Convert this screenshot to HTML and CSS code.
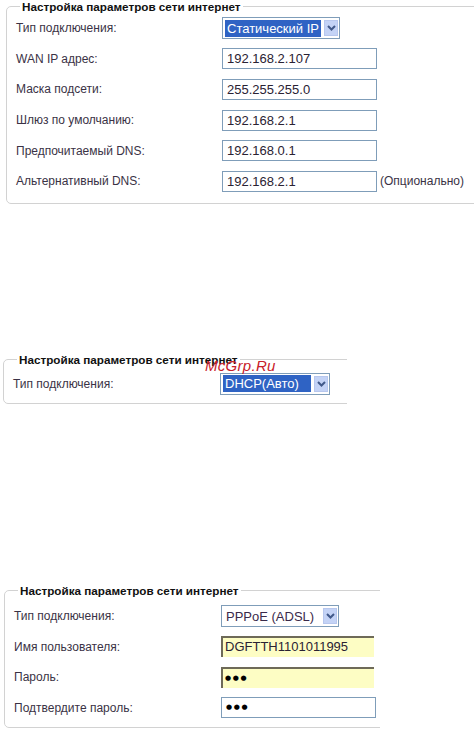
FILE: index.html
```html
<html>

<head>
    <meta http-equiv="Content-Type" content="text/html" charset="utf-8">
    <title>Настройка параметров сети интернет</title>
    <link rel="stylesheet" href="styles.css">
</head>

<body>
    <!-- static IP -->
    <div class="frame frame-static">
        <fieldset class="box">
            <legend>Настройка параметров сети интернет</legend>
            <div class="row">
                <span class="label">Тип подключения:</span>
                <div class="select sel-static">
                    <span class="value selected">Статический IP</span>
                    <span class="arrow"><svg width="9" height="6" viewBox="0 0 9 6"><path d="M1 1 L4.5 4.5 L8 1" fill="none" stroke="#41598a" stroke-width="2"/></svg></span>
                </div>
            </div>
            <div class="row">
                <span class="label">WAN IP адрес:</span>
                <div class="input">192.168.2.107</div>
            </div>
            <div class="row">
                <span class="label">Маска подсети:</span>
                <div class="input">255.255.255.0</div>
            </div>
            <div class="row">
                <span class="label">Шлюз по умолчанию:</span>
                <div class="input">192.168.2.1</div>
            </div>
            <div class="row">
                <span class="label">Предпочитаемый DNS:</span>
                <div class="input">192.168.0.1</div>
            </div>
            <div class="row">
                <span class="label">Альтернативный DNS:</span>
                <div class="input">192.168.2.1</div>
                <span class="note">(Опционально)</span>
            </div>
        </fieldset>
    </div>

    <!-- DHCP -->
    <div class="frame frame-dhcp">
        <fieldset class="box">
            <legend>Настройка параметров сети интернет</legend>
            <div class="row">
                <span class="label">Тип подключения:</span>
                <div class="select sel-dhcp">
                    <span class="value selected">DHCP(Авто)</span>
                    <span class="arrow"><svg width="9" height="6" viewBox="0 0 9 6"><path d="M1 1 L4.5 4.5 L8 1" fill="none" stroke="#41598a" stroke-width="2"/></svg></span>
                </div>
            </div>
        </fieldset>
        <span class="watermark">McGrp.Ru</span>
    </div>

    <!-- PPPoE -->
    <div class="frame frame-pppoe">
        <fieldset class="box">
            <legend>Настройка параметров сети интернет</legend>
            <div class="row">
                <span class="label">Тип подключения:</span>
                <div class="select sel-pppoe">
                    <span class="value">PPPoE (ADSL)</span>
                    <span class="arrow"><svg width="9" height="6" viewBox="0 0 9 6"><path d="M1 1 L4.5 4.5 L8 1" fill="none" stroke="#41598a" stroke-width="2"/></svg></span>
                </div>
            </div>
            <div class="row">
                <span class="label">Имя пользователя:</span>
                <div class="input input-fill">DGFTTH1101011995</div>
            </div>
            <div class="row">
                <span class="label">Пароль:</span>
                <div class="input input-fill"><span class="dots">●●●</span></div>
            </div>
            <div class="row">
                <span class="label">Подтвердите пароль:</span>
                <div class="input"><span class="dots">●●●</span></div>
            </div>
        </fieldset>
    </div>
</body>

</html>
```

FILE: styles.css
```css
body {
    margin: 0;
    background-color: #fff;
    font-family: "Liberation Sans", Arial, sans-serif;
    font-size: 12px;
    color: #3a3245;
    overflow: hidden;
}

.frame {
    position: relative;
    overflow: hidden;
}

.box {
    margin: 0;
    border: 1px solid #d2d2d2;
    border-radius: 5px;
    padding: 0 0 4px 9px;
}

.box legend {
    font-weight: bold;
    font-size: 11.7px;
    line-height: 13px;
    color: #111;
    padding: 0 2px;
    margin-left: 4px;
}

.frame-static {
    width: 474px;
}

.frame-static .box {
    margin-left: 6px;
    padding-bottom: 6px;
    width: 520px;
}

.frame-dhcp {
    width: 347px;
    margin-top: 149px;
}

.frame-dhcp .box {
    margin-left: 3px;
    padding-top: 3px;
    padding-bottom: 4px;
    width: 400px;
}

.frame-pppoe {
    width: 380px;
    margin-top: 180px;
}

.frame-pppoe .box {
    margin-left: 4px;
    padding-top: 4px;
    width: 420px;
}

.row {
    display: flex;
    align-items: center;
    height: 30.6px;
}

.frame-pppoe .row {
    height: 30.4px;
}

.label {
    width: 206px;
    flex-shrink: 0;
}

.frame-dhcp .label,
.frame-pppoe .label {
    width: 207px;
}

.select {
    display: flex;
    align-items: center;
    height: 20px;
    border: 1px solid #7f9db9;
    padding: 0 1px 0 2px;
    background-color: #fff;
    box-sizing: content-box;
}

.sel-static {
    width: 113px;
}

.sel-dhcp {
    width: 105px;
}

.sel-pppoe {
    width: 113px;
}

.select .value {
    flex: 1;
    height: 17px;
    line-height: 17px;
    font-size: 13px;
    padding-left: 2px;
    color: #3a2a4a;
    white-space: nowrap;
    overflow: hidden;
}

.select .value.selected {
    background-color: #2f63c4;
    color: #fff;
    margin-right: 3px;
}

.arrow {
    display: flex;
    align-items: center;
    justify-content: center;
    width: 14px;
    height: 16px;
    background-color: #c4d3f6;
    border: 1px solid #b7c7ee;
    box-sizing: border-box;
}

.input {
    width: 155px;
    height: 21px;
    box-sizing: border-box;
    border: 1px solid #7f9db9;
    padding-left: 4px;
    line-height: 19px;
    font-size: 13px;
    color: #2a2233;
    background-color: #fff;
}

.input-fill {
    background-color: #fdfdc4;
    border: 0;
    border-top: 2px solid #6e6a58;
    border-left: 2px solid #6e6a58;
    width: 153px;
    padding-left: 2px;
    line-height: 18px;
}

.dots {
    font-family: "DejaVu Sans", sans-serif;
    font-size: 7px;
    letter-spacing: 1.6px;
    color: #000;
}

.note {
    margin-left: 3px;
    font-size: 12px;
    color: #3a3245;
    white-space: nowrap;
}

.watermark {
    position: absolute;
    left: 205px;
    top: 4px;
    font-size: 15px;
    font-style: italic;
    color: #c8202a;
    letter-spacing: 0.3px;
}
```
